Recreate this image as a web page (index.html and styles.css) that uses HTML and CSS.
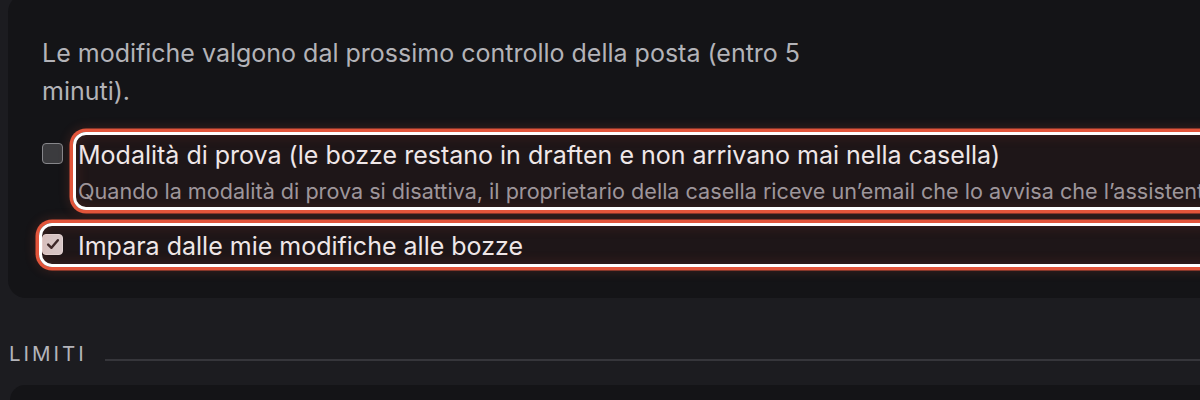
FILE: index.html
```html
<!DOCTYPE html>
<html lang="it">
<head>
<meta charset="utf-8">
<title>Impostazioni</title>
<link rel="stylesheet" href="styles.css">
</head>
<body>
<div class="page">
  <section class="card">
    <p class="note">Le modifiche valgono dal prossimo controllo della posta (entro 5 minuti).</p>
    <div class="row">
      <span class="box"></span>
      <div class="label hl hl-label">
        <div class="title">Modalità di prova (le bozze restano in draften e non arrivano mai nella casella)</div>
        <div class="sub">Quando la modalità di prova si disattiva, il proprietario della casella riceve un’email che lo avvisa che l’assistente ora invia le bozze.</div>
      </div>
    </div>
    <div class="row row-single hl hl-row">
      <span class="box checked">
        <svg viewBox="0 0 20 20" width="20" height="20"><path d="M4.6 10.6 L8.3 14.2 L15.4 5.8" fill="none" stroke="#352729" stroke-width="2.7" stroke-linecap="round" stroke-linejoin="round"/></svg>
      </span>
      <div class="title">Impara dalle mie modifiche alle bozze</div>
    </div>
  </section>
  <div class="section-head">
    <span class="section-title">LIMITI</span>
    <span class="section-line"></span>
  </div>
  <section class="card card-next"></section>
</div>
</body>
</html>
```
FILE: styles.css
```css
html, body {
  margin: 0;
  padding: 0;
  background: #1c1c20;
  overflow: hidden;
}
body {
  font-family: Inter, "Noto Sans", "Liberation Sans", sans-serif;
  color: #ececee;
  width: 1200px;
  height: 400px;
}
.page {
  width: 1500px;
  padding-left: 8px;
}
.card {
  background: #141417;
  border-radius: 18px;
  margin-top: -6px;
  padding: 40px 34px 37px 34px;
}
.note {
  margin: 0 0 30px 0;
  max-width: 800px;
  font-size: 25px;
  line-height: 38px;
  color: #b3b3b8;
}
.row {
  display: flex;
  align-items: flex-start;
  gap: 15px;
  position: relative;
}
.box {
  flex: none;
  box-sizing: border-box;
  width: 21px;
  height: 21px;
  border: 1.5px solid #86868a;
  border-radius: 4px;
  background: #3b3b3e;
  margin-top: 3px;
  display: flex;
  align-items: center;
  justify-content: center;
}
.box svg {
  width: 18px;
  height: 18px;
}
.box.checked {
  background: #d8cfd0;
  border-color: #e4dcdd;
}
.label {
  position: relative;
}
.title {
  font-size: 25px;
  line-height: 30px;
  color: #f2f2f4;
  white-space: nowrap;
}
.sub {
  font-size: 21.6px;
  line-height: 28px;
  color: #9c9ca2;
  white-space: nowrap;
  margin-top: 7px;
}
.row-single {
  margin-top: 25.5px;
}
.hl::after {
  content: "";
  position: absolute;
  border: 3.5px solid #ffffff;
  border-radius: 13px;
  box-shadow: 0 0 0 3.5px #e2553b, 0 0 12px 3px rgba(226, 85, 59, 0.22), inset 0 0 14px rgba(226, 85, 59, 0.16);
  background: rgba(200, 60, 50, 0.06);
  pointer-events: none;
}
.hl-label::after {
  left: -5.5px;
  top: -8.5px;
  bottom: -5px;
  right: -40px;
}
.hl-row::after {
  left: -3.5px;
  top: -7.5px;
  bottom: -6.5px;
  right: 0;
}
.section-head {
  display: flex;
  gap: 18px;
  margin-top: 44.5px;
  padding-left: 1px;
  height: 24px;
}
.section-title {
  font-size: 20.5px;
  line-height: 24px;
  letter-spacing: 3px;
  color: #b4b4ba;
}
.section-line {
  flex: 1;
  height: 2px;
  background: #36363b;
  align-self: flex-end;
  margin-bottom: 5px;
}
.card-next {
  margin-top: 18.5px;
  padding: 0;
  height: 15px;
  border-radius: 16px 16px 0 0;
  margin-left: 2px;
}
```
